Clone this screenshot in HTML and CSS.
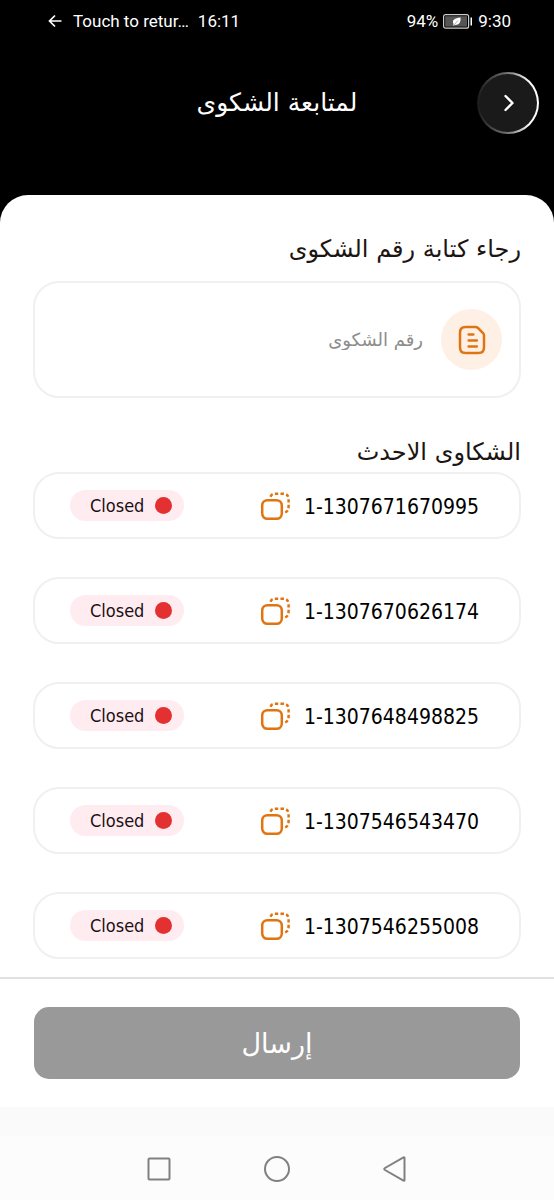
FILE: index.html
```html
<!DOCTYPE html>
<html lang="ar" dir="rtl">
<head>
<meta charset="utf-8">
<meta name="viewport" content="width=device-width, initial-scale=1">
<title>لمتابعة الشكوى</title>
<link rel="stylesheet" href="styles.css">
</head>
<body>
<svg class="sprite" aria-hidden="true">
  <symbol id="copy" viewBox="0 0 30 30">
    <rect x="2.2" y="9.200" width="19.6" height="18.6" rx="5.2" fill="none" stroke="currentColor" stroke-width="2.5"/>
    <path d="M10.5 5.7C11.3 3.500 12.8 2.700 15 2.700H23C26.5 2.700 28.600 4.700 28.600 8V15C28.600 18.500 27.500 21 24 21.700" fill="none" stroke="currentColor" stroke-width="2.5" stroke-dasharray="3.4 2.2"/>
  </symbol>
</svg>
<div class="screen">
  <div class="status" dir="ltr">
    <div class="status-side">
      <svg class="back-arrow" viewBox="0 0 14 14" aria-hidden="true"><path d="M13.500 7H1.500M7 1.500L1.500 7L7 12.500" fill="none" stroke="currentColor" stroke-width="1.700"/></svg>
      <span>Touch to retur…</span>
      <span class="call-time">16:11</span>
    </div>
    <div class="status-side status-end">
      <span>94%</span>
      <svg class="battery" viewBox="0 0 30 15" aria-hidden="true">
        <rect x=".6" y=".6" width="25" height="13.600" rx="2" fill="none" stroke="#ccc" stroke-width="1.200"/>
        <rect x="2.200" y="2.200" width="21.800" height="10.400" fill="#555"/>
        <path d="M27.500 3.500H29V11.500H27.500Z" fill="#fff"/>
        <path d="M17.500 3.500C18 8 16.500 11 12 11L10 12L10.500 10C8.500 6 12 4 17.500 3.500Z" fill="#fff"/>
        <path d="M10 12L15 6.500" stroke="#777" stroke-width=".6"/>
      </svg>
      <span>9:30</span>
    </div>
  </div>
  <header class="header">
    <button class="back" type="button" aria-label="رجوع">
      <svg viewBox="0 0 12 18" aria-hidden="true"><path d="M3.500 2L10.500 9L3.500 16" fill="none" stroke="currentColor" stroke-width="2.400" stroke-linecap="round" stroke-linejoin="round"/></svg>
    </button>
    <h1 class="title">لمتابعة الشكوى</h1>
  </header>
  <main class="sheet">
    <label class="heading" for="number">رجاء كتابة رقم الشكوى</label>
    <div class="field">
      <span class="field-icon">
        <svg viewBox="0 0 28 30" aria-hidden="true"><path d="M7.500 2H17.500C18.500 2 19.200 2.300 20 3L25 8C25.700 8.800 26 9.500 26 10.500V22.500C26 26 24 28 20.500 28H7.500C4 28 2 26 2 22.500V7.500C2 4 4 2 7.500 2Z" fill="none" stroke="currentColor" stroke-width="2.500"/><path d="M10.500 9.500H15.500M10.500 15.500H19M10.500 21.500H19" fill="none" stroke="currentColor" stroke-width="2.300" stroke-linecap="round"/></svg>
      </span>
      <input class="number-input" id="number" type="text" placeholder="رقم الشكوى">
    </div>
    <h2 class="heading">الشكاوى الاحدث</h2>
    <ul class="list">
      <li class="item"><span class="id" dir="ltr">1-1307671670995</span><button class="copy" type="button" aria-label="نسخ"><svg aria-hidden="true"><use href="#copy"/></svg></button><span class="badge">Closed</span></li>
      <li class="item"><span class="id" dir="ltr">1-1307670626174</span><button class="copy" type="button" aria-label="نسخ"><svg aria-hidden="true"><use href="#copy"/></svg></button><span class="badge">Closed</span></li>
      <li class="item"><span class="id" dir="ltr">1-1307648498825</span><button class="copy" type="button" aria-label="نسخ"><svg aria-hidden="true"><use href="#copy"/></svg></button><span class="badge">Closed</span></li>
      <li class="item"><span class="id" dir="ltr">1-1307546543470</span><button class="copy" type="button" aria-label="نسخ"><svg aria-hidden="true"><use href="#copy"/></svg></button><span class="badge">Closed</span></li>
      <li class="item"><span class="id" dir="ltr">1-1307546255008</span><button class="copy" type="button" aria-label="نسخ"><svg aria-hidden="true"><use href="#copy"/></svg></button><span class="badge">Closed</span></li>
    </ul>
  </main>
  <footer class="actions">
    <button class="send" type="button">إرسال</button>
  </footer>
  <div class="spacer"></div>
  <nav class="nav" dir="ltr">
    <button type="button" aria-label="Recent apps"><svg viewBox="0 0 26 26" aria-hidden="true"><rect x="2.500" y="2.500" width="21" height="21" rx="1"/></svg></button>
    <button type="button" aria-label="Home"><svg viewBox="0 0 26 26" aria-hidden="true"><circle cx="13" cy="13" r="12"/></svg></button>
    <button type="button" aria-label="Back"><svg viewBox="0 0 26 26" aria-hidden="true"><path d="M22.500 2V24Q22.500 25 21.500 24.500L3 14Q1.500 13 3 12L21.500 1.500Q22.500 1 22.500 2Z"/></svg></button>
  </nav>
</div>
</body>
</html>
```

FILE: styles.css
```css
* { box-sizing: border-box; }

body {
  margin: 0;
  background: #000;
  color: #000;
  font-family: "DejaVu Sans", sans-serif;
}

button {
  padding: 0;
  border: 0;
  background: none;
  font: inherit;
}

.sprite { display: none; }

.screen {
  display: flex;
  flex-direction: column;
  min-height: 100vh;
}

.status {
  display: flex;
  justify-content: space-between;
  height: 42px;
  padding: 0 43px 0 48px;
  color: #fff;
  font-family: Roboto, sans-serif;
  font-size: 17px;
}

.status-side {
  display: flex;
  align-items: center;
  gap: 11px;
}

.call-time { margin-left: -2px; }
.status-end { gap: 5px; }
.back-arrow { width: 14px; height: 14px; }
.battery { width: 30px; height: 15px; }

.header {
  display: grid;
  grid-template-columns: 62px 1fr 62px;
  align-items: center;
  height: 153px;
  padding: 0 15px 31px;
  color: #fff;
}

.back {
  display: grid;
  place-items: center;
  width: 62px;
  height: 62px;
  border: 2px solid transparent;
  border-radius: 50%;
  background:
    linear-gradient(#1a1a1a, #1a1a1a) padding-box,
    linear-gradient(90deg, #1a1a1a, #777 50%, #fff 85%) border-box;
  color: #fff;
}

.back svg { width: 12px; height: 18px; }

.title {
  margin: 0;
  font-size: 25px;
  font-weight: 400;
  line-height: 32px;
  text-align: center;
}

.sheet {
  flex: 1;
  padding: 38px 33px 18px;
  border-radius: 28px 28px 0 0;
  background: #fff;
}

.heading {
  display: block;
  margin: 0;
  color: #1d1512;
  font-size: 24px;
  font-weight: 400;
  line-height: 32px;
}

.field {
  display: flex;
  align-items: center;
  gap: 18px;
  height: 117px;
  margin: 16px 0 38px;
  padding: 0 17px;
  border: 2px solid #f0f0f0;
  border-radius: 26px;
}

.field-icon {
  display: grid;
  flex: none;
  place-items: center;
  width: 61px;
  height: 61px;
  border-radius: 50%;
  background: #fff0e6;
  color: #e07410;
}

.field-icon svg { width: 28px; height: 30px; }

.number-input {
  flex: 1;
  min-width: 0;
  padding: 0;
  border: 0;
  outline: 0;
  background: none;
  font: inherit;
  font-size: 18px;
}

.number-input::placeholder { color: #8c8c8c; opacity: 1; }

.list {
  display: grid;
  gap: 38px;
  margin: 4px 0 0;
  padding: 0;
  list-style: none;
}

.item {
  display: flex;
  align-items: center;
  height: 67px;
  padding: 0 40px 0 35px;
  border: 2px solid #f0f0f0;
  border-radius: 26px;
}

.id,
.badge {
  font-family: "DejaVu Sans Condensed", "DejaVu Sans", sans-serif;
  font-stretch: condensed;
}

.id {
  padding-top: 2px;
  font-size: 21px;
}

.copy {
  width: 30px;
  height: 30px;
  margin-right: 14px;
  color: #e07410;
}

.copy svg { display: block; width: 30px; height: 30px; }

.badge {
  display: flex;
  align-items: center;
  gap: 11px;
  height: 31px;
  margin-right: auto;
  padding: 0 12px 0 20px;
  border-radius: 16px;
  background: #ffecf1;
  color: #1d1014;
  font-size: 18px;
}

.badge::before {
  content: "";
  width: 17px;
  height: 17px;
  border-radius: 50%;
  background: #e33030;
}

.actions {
  padding: 28px 34px;
  border-top: 2px solid #e0e0e0;
  background: #fff;
}

.send {
  display: block;
  width: 100%;
  height: 72px;
  border-radius: 15px;
  background: #999;
  color: #fff;
  font-size: 27px;
}

.spacer { height: 29px; background: #fafafa; }

.nav {
  display: flex;
  justify-content: center;
  align-items: center;
  gap: 92px;
  height: 64px;
  padding-top: 2px;
  background: #fcfcfc;
}

.nav svg {
  display: block;
  width: 26px;
  height: 26px;
  fill: none;
  stroke: #808080;
  stroke-width: 2;
}
```
